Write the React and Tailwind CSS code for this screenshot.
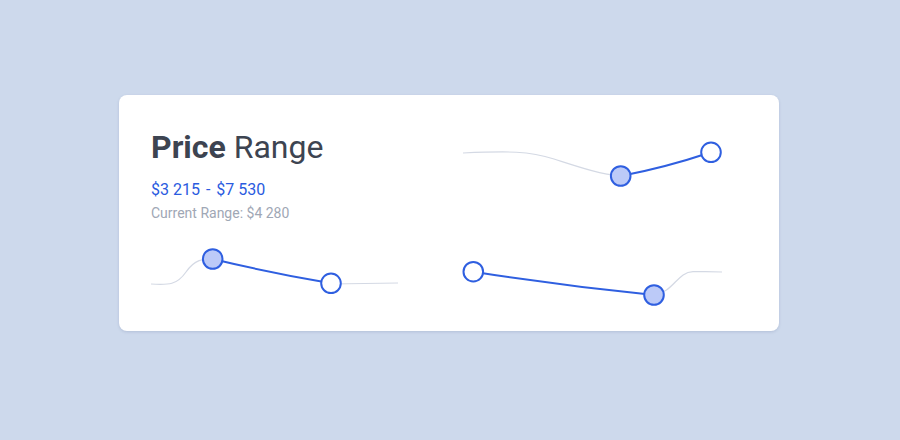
import React from "react";

const BLUE = "#2f5fe0";
const FILL = "#bccaf8";
const GREY = "#d4d9e4";

function Knob({ cx, cy, filled }) {
  return (
    <circle cx={cx} cy={cy} r="9.8" fill={filled ? FILL : "#ffffff"} stroke={BLUE} strokeWidth="2" />
  );
}

export default function App() {
  return (
    <div className="w-[900px] h-[440px] bg-[#cdd9ec] pt-[95px] pl-[119px]" style={{ fontFamily: "Roboto, 'Noto Sans', sans-serif" }}>
      <div className="w-[660px] h-[236px] bg-white rounded-lg shadow-[0_1px_3px_rgba(60,80,130,0.18)] px-8 pt-[33px]">
        <div className="grid grid-cols-2">
          <div>
            <h1 className="text-[32px] leading-[38px] text-[#3d4451]">
              <span className="font-bold">Price</span> <span className="font-normal">Range</span>
            </h1>
            <div className="mt-[12px] text-[16px] leading-[24px] font-normal text-[#2a5be0] flex">
              <span>$3 215</span>
              <span className="mx-[6px]">-</span>
              <span>$7 530</span>
            </div>
            <div className="mt-[1px] text-[14px] leading-[20px] text-[#a0a7b5]">Current Range: $4 280</div>
          </div>
          <svg width="298" height="80" viewBox="0 0 298 80" className="block">
            <path d="M14 25 C 60 23, 80 23, 105 31 S 150 46, 171.7 48" fill="none" stroke={GREY} strokeWidth="1.2" />
            <path d="M171.7 48 Q 215 40, 262 24.3" fill="none" stroke={BLUE} strokeWidth="2" />
            <Knob cx={171.7} cy={48} filled />
            <Knob cx={262} cy={24.3} />
          </svg>
        </div>
        <div className="grid grid-cols-2 mt-[7px]">
          <svg width="298" height="80" viewBox="0 0 298 80" className="block">
            <path d="M0 54 C 18 55, 26 55, 35 42 S 52 29, 61.7 29" fill="none" stroke={GREY} strokeWidth="1.2" />
            <path d="M180 54 L 247 53" fill="none" stroke={GREY} strokeWidth="1.2" />
            <path d="M61.7 29 Q 120 43, 180 53.3" fill="none" stroke={BLUE} strokeWidth="2" />
            <Knob cx={61.7} cy={29} filled />
            <Knob cx={180} cy={53.3} />
          </svg>
          <svg width="298" height="80" viewBox="0 0 298 80" className="block">
            <path d="M205 65 C 225 62, 228 42, 244 41.7 S 265 41.5, 273 42" fill="none" stroke={GREY} strokeWidth="1.2" />
            <path d="M24.3 41.7 Q 115 56, 205 65" fill="none" stroke={BLUE} strokeWidth="2" />
            <Knob cx={24.3} cy={41.7} />
            <Knob cx={205} cy={65} filled />
          </svg>
        </div>
      </div>
    </div>
  );
}
